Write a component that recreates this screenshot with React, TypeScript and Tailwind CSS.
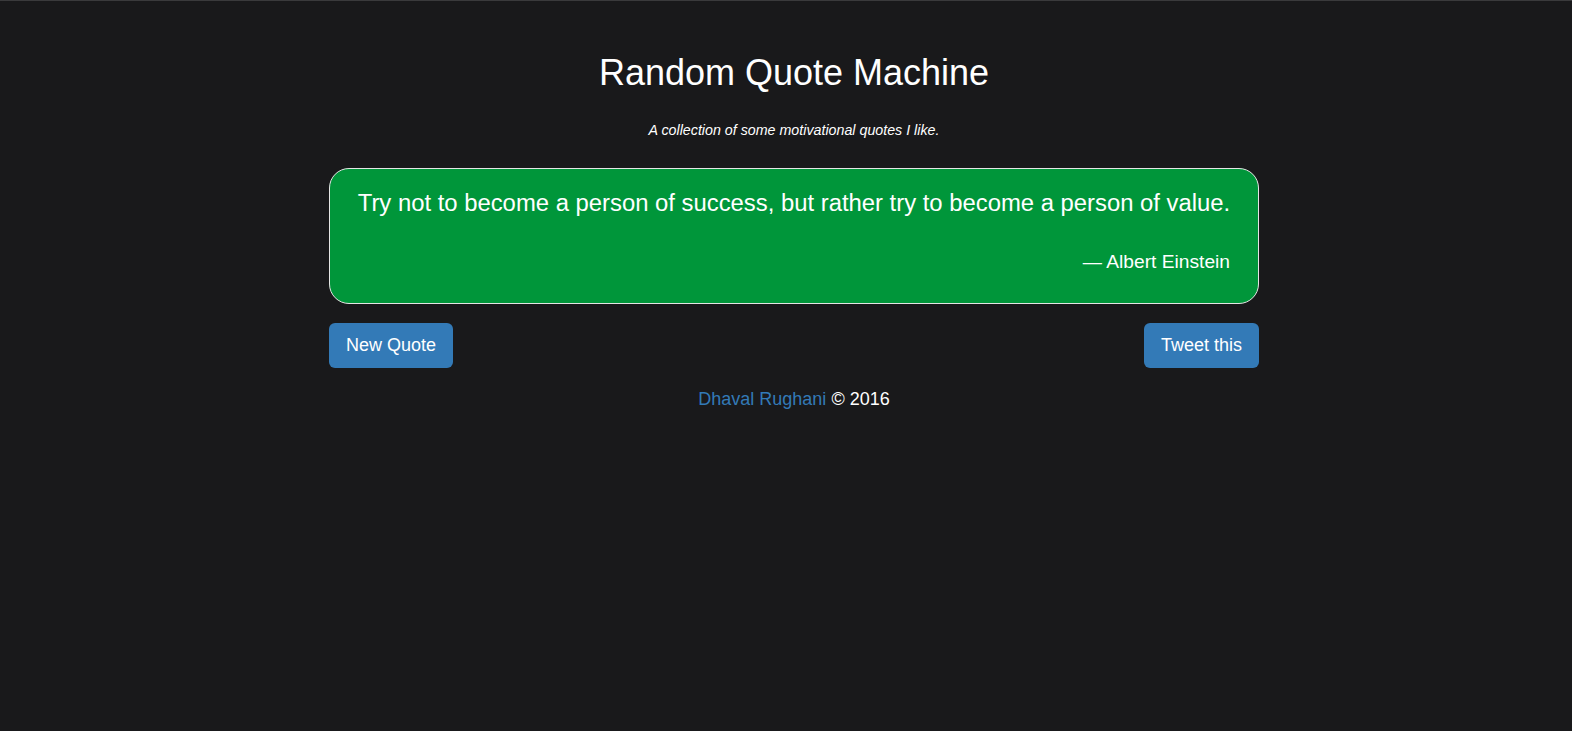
export default function App() {
  return (
    <div
      className="min-h-[731px] w-full bg-[#19191b] border-t border-[#3a3a3c] pl-[16px] text-white"
      style={{ fontFamily: '"Liberation Sans", Arial, sans-serif' }}
    >
      <div className="mx-auto w-[930px] flex flex-col">
        <h1 className="mt-[52px] text-center text-[36px] leading-[40px] font-normal">
          Random Quote Machine
        </h1>
        <p className="mt-[27px] text-center text-[14.25px] leading-[20px] italic">
          A collection of some motivational quotes I like.
        </p>

        <div className="mt-[28px] rounded-[20px] border border-[#e5e5e5] bg-[#00963a] px-[20px] pt-[18px] pb-[28px]">
          <p className="text-center text-[23.85px] leading-[32px]">
            Try not to become a person of success, but rather try to become a person of value.
          </p>
          <p className="mt-[30px] pr-[8px] text-right text-[19.2px] leading-[26px]">— Albert Einstein</p>
        </div>

        <div className="mt-[19px] flex justify-between">
          <button className="h-[45px] rounded-[6px] bg-[#337ab7] px-[17px] text-[18px] text-white">
            New Quote
          </button>
          <button className="h-[45px] rounded-[6px] bg-[#337ab7] px-[17px] text-[18px] text-white">
            Tweet this
          </button>
        </div>

        <p className="mt-[18px] text-center text-[18px] leading-[26px]">
          <a href="#" className="text-[#337ab7]">
            Dhaval Rughani
          </a>{" "}
          © 2016
        </p>
      </div>
    </div>
  );
}
